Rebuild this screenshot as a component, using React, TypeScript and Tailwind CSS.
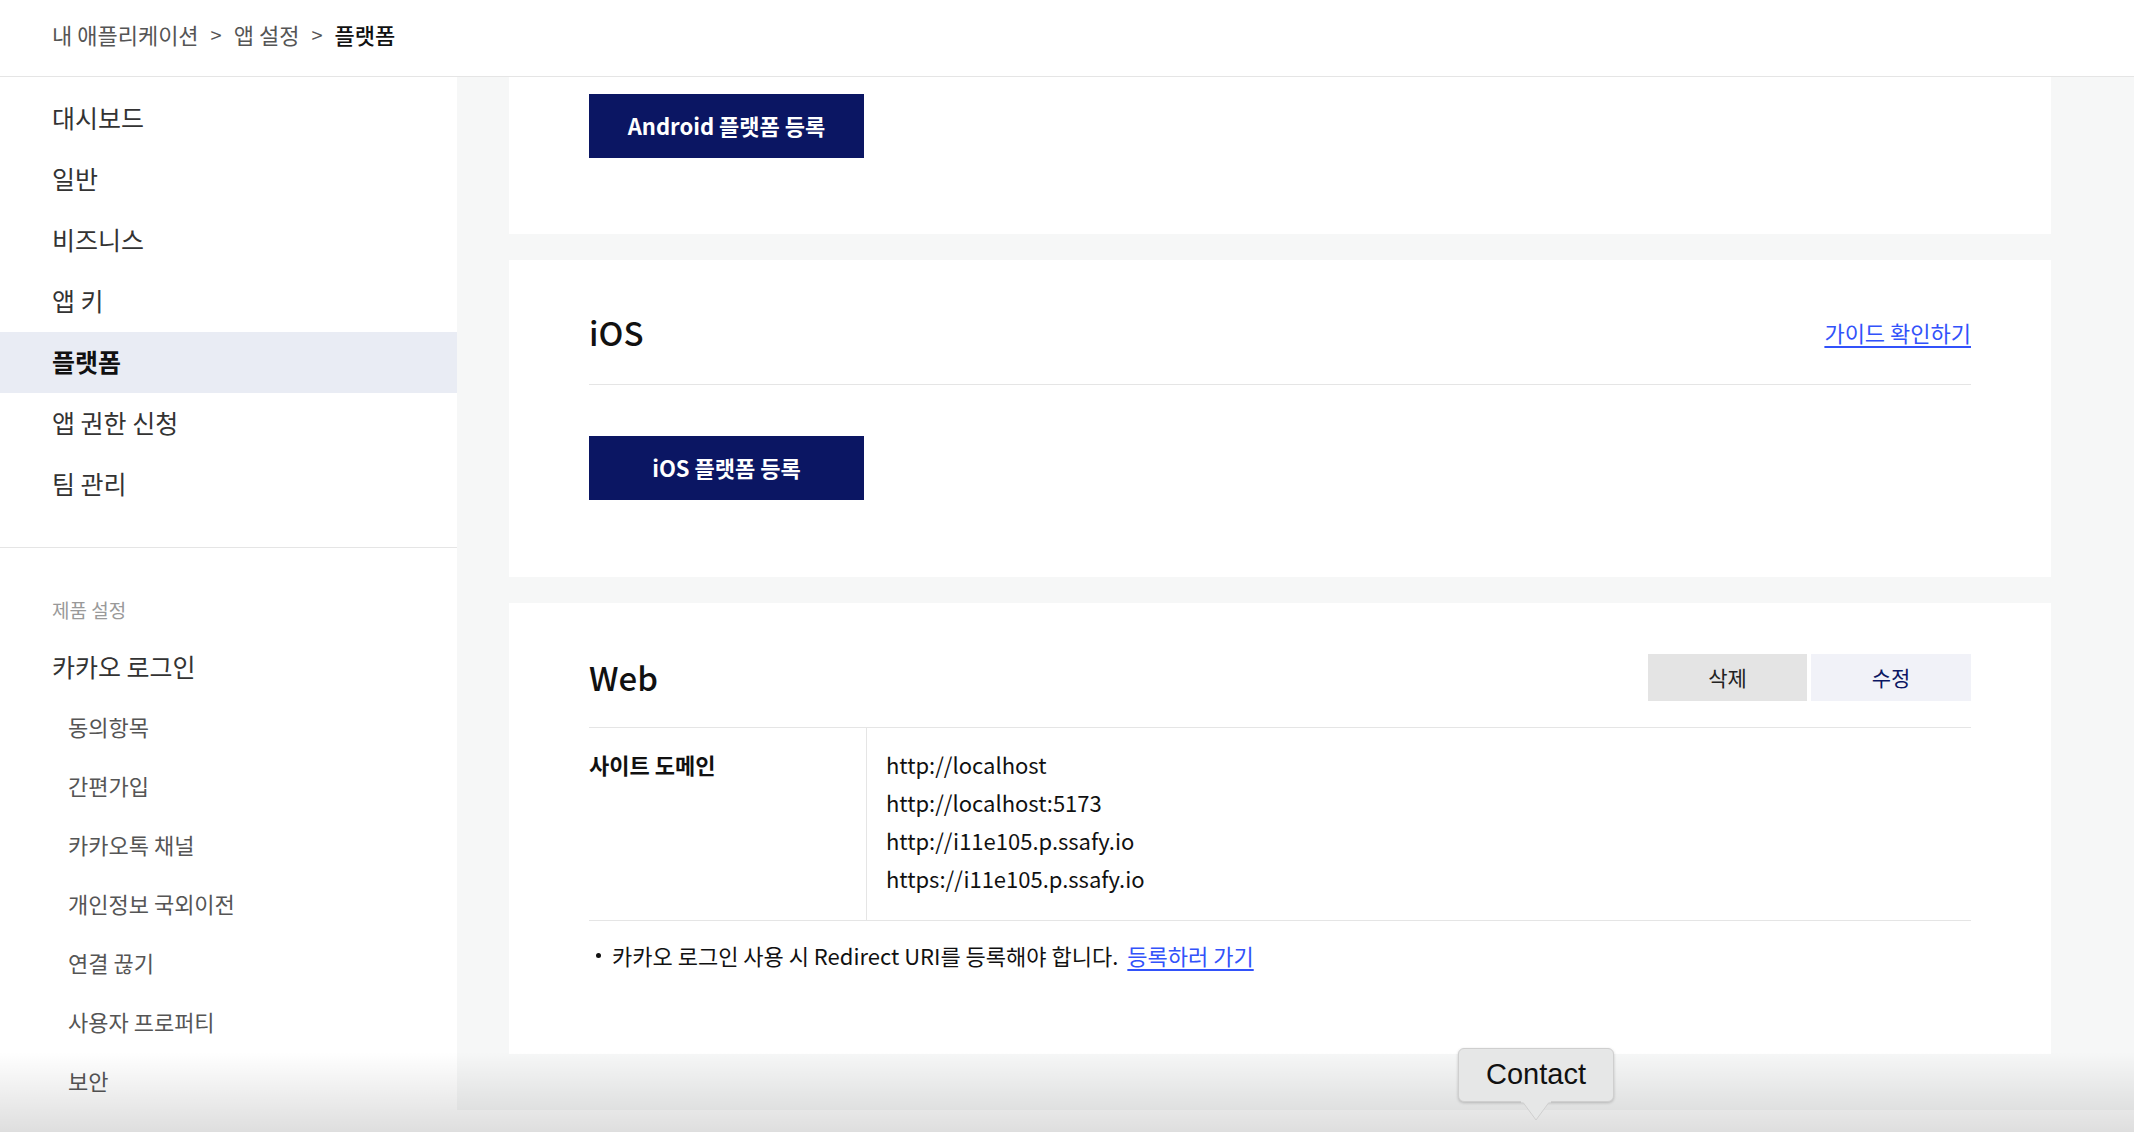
import React from 'react';

const menu = ['대시보드', '일반', '비즈니스', '앱 키', '플랫폼', '앱 권한 신청', '팀 관리'];
const loginSub = ['동의항목', '간편가입', '카카오톡 채널', '개인정보 국외이전', '연결 끊기', '사용자 프로퍼티', '보안'];
const domains = ['http://localhost', 'http://localhost:5173', 'http://i11e105.p.ssafy.io', 'https://i11e105.p.ssafy.io'];

export default function App() {
  return (
    <div className="relative h-[1132px] w-full overflow-hidden bg-white font-['Noto_Sans_CJK_KR','Noto_Sans',sans-serif] text-[#222]">
      {/* Breadcrumb header */}
      <header className="flex h-[77px] items-center border-b border-[#e5e5e5] bg-white pb-[7px] pl-[52px] text-[22px]">
        <span className="text-[#555]">내 애플리케이션</span>
        <span className="mx-[12px] text-[20px] text-[#555]">&gt;</span>
        <span className="text-[#555]">앱 설정</span>
        <span className="mx-[12px] text-[20px] text-[#555]">&gt;</span>
        <span className="font-medium text-[#111]">플랫폼</span>
      </header>

      <div className="flex">
        {/* Sidebar */}
        <aside className="w-[457px] shrink-0 bg-white">
          <nav className="border-b border-[#e5e5e5] pb-[32px] pt-[11px]">
            {menu.map((m) => (
              <div
                key={m}
                className={
                  m === '플랫폼'
                    ? 'flex h-[61px] items-center bg-[#e9ecf4] pb-[2px] pl-[52px] text-[25px] font-bold text-[#111]'
                    : 'flex h-[61px] items-center pb-[2px] pl-[52px] text-[25px] text-[#333]'
                }
              >
                {m}
              </div>
            ))}
          </nav>
          <div className="pl-[52px] pt-[50px]">
            <div className="h-[24px] text-[19px] leading-[24px] text-[#999]">제품 설정</div>
            <div className="mt-[27px] flex h-[36px] items-center text-[25px] text-[#333]">카카오 로그인</div>
            <div className="mt-[12px]">
              {loginSub.map((s) => (
                <div key={s} className="flex h-[59px] items-center pl-[16px] text-[22px] text-[#555]">
                  {s}
                </div>
              ))}
            </div>
          </div>
        </aside>

        {/* Content */}
        <main className="flex flex-1 flex-col gap-[26px] bg-[#f6f7f7] pl-[52px] pr-[83px]">
          {/* Android (scrolled) */}
          <section className="bg-white px-[80px] pb-[76px] pt-[17px]">
            <button className="flex h-[64px] w-[275px] items-center justify-center bg-[#0b1663] pb-[2px] text-[22px] font-bold text-white">
              Android 플랫폼 등록
            </button>
          </section>

          {/* iOS */}
          <section className="bg-white px-[80px] pb-[77px] pt-[50px]">
            <div className="flex h-[75px] items-start justify-between border-b border-[#e5e5e5]">
              <div className="flex h-[44px] w-full items-center justify-between">
                <h2 className="text-[33px] font-medium leading-none text-[#111]">iOS</h2>
                <a className="text-[22px] text-[#3252fa] underline underline-offset-[4px]">가이드 확인하기</a>
              </div>
            </div>
            <button className="mt-[51px] flex h-[64px] w-[275px] items-center justify-center bg-[#0b1663] pb-[2px] text-[22px] font-bold text-white">
              iOS 플랫폼 등록
            </button>
          </section>

          {/* Web */}
          <section className="bg-white px-[80px] pb-[85px] pt-[51px]">
            <div className="flex h-[47px] items-center justify-between">
              <h2 className="text-[33px] font-medium leading-none text-[#111]">Web</h2>
              <div className="flex gap-[4px]">
                <button className="flex h-[47px] w-[159px] items-center justify-center bg-[#e4e4e4] text-[21px] text-[#222]">
                  삭제
                </button>
                <button className="flex h-[47px] w-[160px] items-center justify-center bg-[#f1f2f8] text-[21px] text-[#0b1663]">
                  수정
                </button>
              </div>
            </div>
            <div className="mt-[26px] flex border-y border-[#e5e5e5]">
              <div className="w-[278px] shrink-0 border-r border-[#e5e5e5] pt-[17px] text-[22px] font-bold leading-[38px] text-[#111]">
                사이트 도메인
              </div>
              <div className="pb-[23px] pl-[19px] pt-[17px] text-[22px] leading-[38px] text-[#111]">
                {domains.map((d) => (
                  <div key={d}>{d}</div>
                ))}
              </div>
            </div>
            <div className="mt-[20px] flex items-center text-[22px] leading-[28px] text-[#111]">
              <span className="ml-[7px] mr-[11px] h-[5px] w-[5px] rounded-full bg-[#111]" />
              <span>카카오 로그인 사용 시 Redirect URI를 등록해야 합니다.</span>
              <a className="ml-[9px] text-[#3252fa] underline underline-offset-[4px]">등록하러 가기</a>
            </div>
          </section>
        </main>
      </div>

      {/* bottom fade */}
      <div className="pointer-events-none absolute bottom-0 left-0 h-[80px] w-full bg-gradient-to-b from-[rgba(0,0,0,0)] to-[rgba(0,0,0,0.13)]" />

      {/* Contact tooltip */}
      <div className="absolute left-[1458px] top-[1048px] flex flex-col items-center">
        <div className="flex h-[54px] w-[156px] items-center justify-center rounded-[6px] border border-[#cfcfcf] bg-[#e6e7e7] font-['Liberation_Sans',Arial,sans-serif] text-[29px] text-[#111] shadow-[0_1px_3px_rgba(0,0,0,0.2)]">
          Contact
        </div>
        <svg width="30" height="20" viewBox="0 0 30 20" className="-mt-[1px]">
          <path d="M1 0 L15 19 L29 0 Z" fill="#e6e7e7" stroke="#cfcfcf" strokeWidth="1" />
          <rect x="0" y="0" width="30" height="1.5" fill="#e6e7e7" />
        </svg>
      </div>
    </div>
  );
}
